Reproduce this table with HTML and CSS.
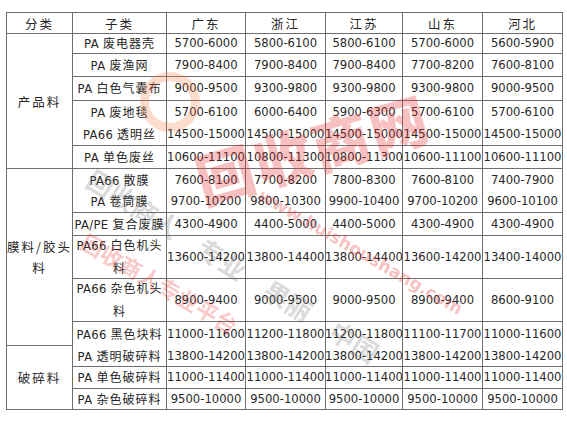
FILE: index.html
```html
<!DOCTYPE html>
<html lang="zh">
<head>
<meta charset="utf-8">
<title>PA 废料价格</title>
<link rel="stylesheet" href="styles.css">
</head>
<body>
<div class="wrap">
  <div class="grid">
    <div class="h">分类</div>
    <div class="h">子类</div>
    <div class="h">广东</div>
    <div class="h">浙江</div>
    <div class="h">江苏</div>
    <div class="h">山东</div>
    <div class="h">河北</div>

    <div class="cat cat1"><span class="zh">产品料</span></div>
    <div class="sub"><span>PA <span class="zh">废电器壳</span></span></div>
    <div>5700-6000</div><div>5800-6100</div><div>5800-6100</div><div>5700-6000</div><div>5600-5900</div>

    <div class="sub"><span>PA <span class="zh">废渔网</span></span></div>
    <div>7900-8400</div><div>7900-8400</div><div>7900-8400</div><div>7700-8200</div><div>7600-8100</div>

    <div class="sub"><span>PA <span class="zh">白色气囊布</span></span></div>
    <div>9000-9500</div><div>9300-9800</div><div>9300-9800</div><div>9300-9800</div><div>9000-9500</div>

    <div class="sub nb"><span>PA <span class="zh">废地毯</span></span></div>
    <div class="nb">5700-6100</div><div class="nb">6000-6400</div><div class="nb">5900-6300</div><div class="nb">5700-6100</div><div class="nb">5700-6100</div>

    <div class="sub"><span>PA66 <span class="zh">透明丝</span></span></div>
    <div>14500-15000</div><div>14500-15000</div><div>14500-15000</div><div>14500-15000</div><div>14500-15000</div>

    <div class="sub"><span>PA <span class="zh">单色废丝</span></span></div>
    <div>10600-11100</div><div>10800-11300</div><div>10800-11300</div><div>10600-11100</div><div>10600-11100</div>

    <div class="cat cat2"><span class="zh">膜料/胶头<br>料</span></div>
    <div class="sub nb"><span>PA66 <span class="zh">散膜</span></span></div>
    <div class="nb">7600-8100</div><div class="nb">7700-8200</div><div class="nb">7800-8300</div><div class="nb">7600-8100</div><div class="nb">7400-7900</div>

    <div class="sub"><span>PA <span class="zh">卷筒膜</span></span></div>
    <div>9700-10200</div><div>9800-10300</div><div>9900-10400</div><div>9700-10200</div><div>9600-10100</div>

    <div class="sub"><span>PA/PE <span class="zh">复合废膜</span></span></div>
    <div>4300-4900</div><div>4400-5000</div><div>4400-5000</div><div>4300-4900</div><div>4300-4900</div>

    <div class="sub"><span>PA66 <span class="zh">白色机头</span><br><span class="zh">料</span></span></div>
    <div>13600-14200</div><div>13800-14400</div><div>13800-14400</div><div>13600-14200</div><div>13400-14000</div>

    <div class="sub"><span>PA66 <span class="zh">杂色机头</span><br><span class="zh">料</span></span></div>
    <div>8900-9400</div><div>9000-9500</div><div>9000-9500</div><div>8900-9400</div><div>8600-9100</div>

    <div class="sub nb"><span>PA66 <span class="zh">黑色块料</span></span></div>
    <div class="nb">11000-11600</div><div class="nb">11200-11800</div><div class="nb">11200-11800</div><div class="nb">11100-11700</div><div class="nb">11000-11600</div>

    <div class="cat cat3"><span class="zh">破碎料</span></div>
    <div class="sub"><span>PA <span class="zh">透明破碎料</span></span></div>
    <div>13800-14200</div><div>13800-14200</div><div>13800-14200</div><div>13800-14200</div><div>13800-14200</div>

    <div class="sub"><span>PA <span class="zh">单色破碎料</span></span></div>
    <div>11000-11400</div><div>11000-11400</div><div>11000-11400</div><div>11000-11400</div><div>11000-11400</div>

    <div class="sub"><span>PA <span class="zh">杂色破碎料</span></span></div>
    <div>9500-10000</div><div>9500-10000</div><div>9500-10000</div><div>9500-10000</div><div>9500-10000</div>
  </div>

  <div class="mark" aria-hidden="true">
    <div class="ring"></div>
    <div class="logo">回收商网</div>
    <div class="url">www.huishoushang.com</div>
    <div class="gray">回收商人　专业　果丽　中国</div>
    <div class="red2">回收商人专业平台</div>
  </div>
</div>
</body>
</html>
```
FILE: styles.css
```css
html, body {
  margin: 0;
  padding: 0;
  background: #ffffff;
}

body {
  font-family: "DejaVu Sans", "Noto Sans CJK SC", sans-serif;
  font-size: 11.6px;
  color: #262626;
}

.wrap {
  position: relative;
  padding: 12px 0 0 6px;
  width: 557px;
  overflow: hidden;
}

.grid {
  display: grid;
  grid-template-columns: 66px 94px 79px 80px 77px 80px 80px;
  grid-template-rows: 21px 20px 23px 24px 22px 23px 23px 22px 22px 23px 43px 43px 24px 21px 22px 21px;
  border-top: 1px solid #6e6e6e;
  border-left: 1px solid #6e6e6e;
  width: 557px;
  box-sizing: border-box;
}

.grid > div {
  border-right: 1px solid #6e6e6e;
  border-bottom: 1px solid #6e6e6e;
  display: flex;
  align-items: center;
  justify-content: center;
  text-align: center;
  white-space: nowrap;
  line-height: 21px;
}

.grid > div.nb {
  border-bottom: 0;
  padding-top: 1px;
}

.zh {
  font-family: "Noto Sans CJK SC", sans-serif;
  font-size: 12px;
  letter-spacing: 1px;
  font-weight: 400;
}

.h {
  font-family: "Noto Sans CJK SC", sans-serif;
  font-size: 12.5px;
  letter-spacing: 2px;
}

.sub {
  letter-spacing: 0.3px;
}

.cat1 { grid-row: span 6; }
.cat2 { grid-row: span 6; }
.cat3 { grid-row: span 3; }

.cat .zh {
  letter-spacing: 2px;
  font-size: 12.5px;
}

/* watermark overlay */
.mark {
  position: absolute;
  inset: 0;
  pointer-events: none;
}

.ring {
  position: absolute;
  left: 140px;
  top: 72px;
  width: 60px;
  height: 60px;
  border-radius: 50%;
  border: 9px solid rgba(245, 120, 60, 0.26);
  box-sizing: border-box;
}

.logo {
  position: absolute;
  left: 185px;
  top: 140px;
  font-family: "Noto Sans CJK SC", sans-serif;
  font-weight: 900;
  font-size: 58px;
  letter-spacing: 2px;
  color: rgba(232, 50, 50, 0.3);
  transform: rotate(-16deg);
  transform-origin: left top;
}

.url {
  position: absolute;
  left: 265px;
  top: 185px;
  font-family: "DejaVu Sans", sans-serif;
  font-weight: bold;
  font-size: 17px;
  color: rgba(232, 60, 60, 0.32);
  transform: rotate(30deg);
  transform-origin: left top;
}

.gray {
  position: absolute;
  left: 100px;
  top: 160px;
  font-family: "Noto Sans CJK SC", sans-serif;
  font-weight: 700;
  font-size: 26px;
  color: rgba(110, 110, 110, 0.25);
  transform: rotate(32deg);
  transform-origin: left top;
}

.red2 {
  position: absolute;
  left: 92px;
  top: 225px;
  font-family: "Noto Sans CJK SC", sans-serif;
  font-weight: 700;
  font-size: 22px;
  color: rgba(235, 60, 60, 0.28);
  transform: rotate(30deg);
  transform-origin: left top;
}
```
